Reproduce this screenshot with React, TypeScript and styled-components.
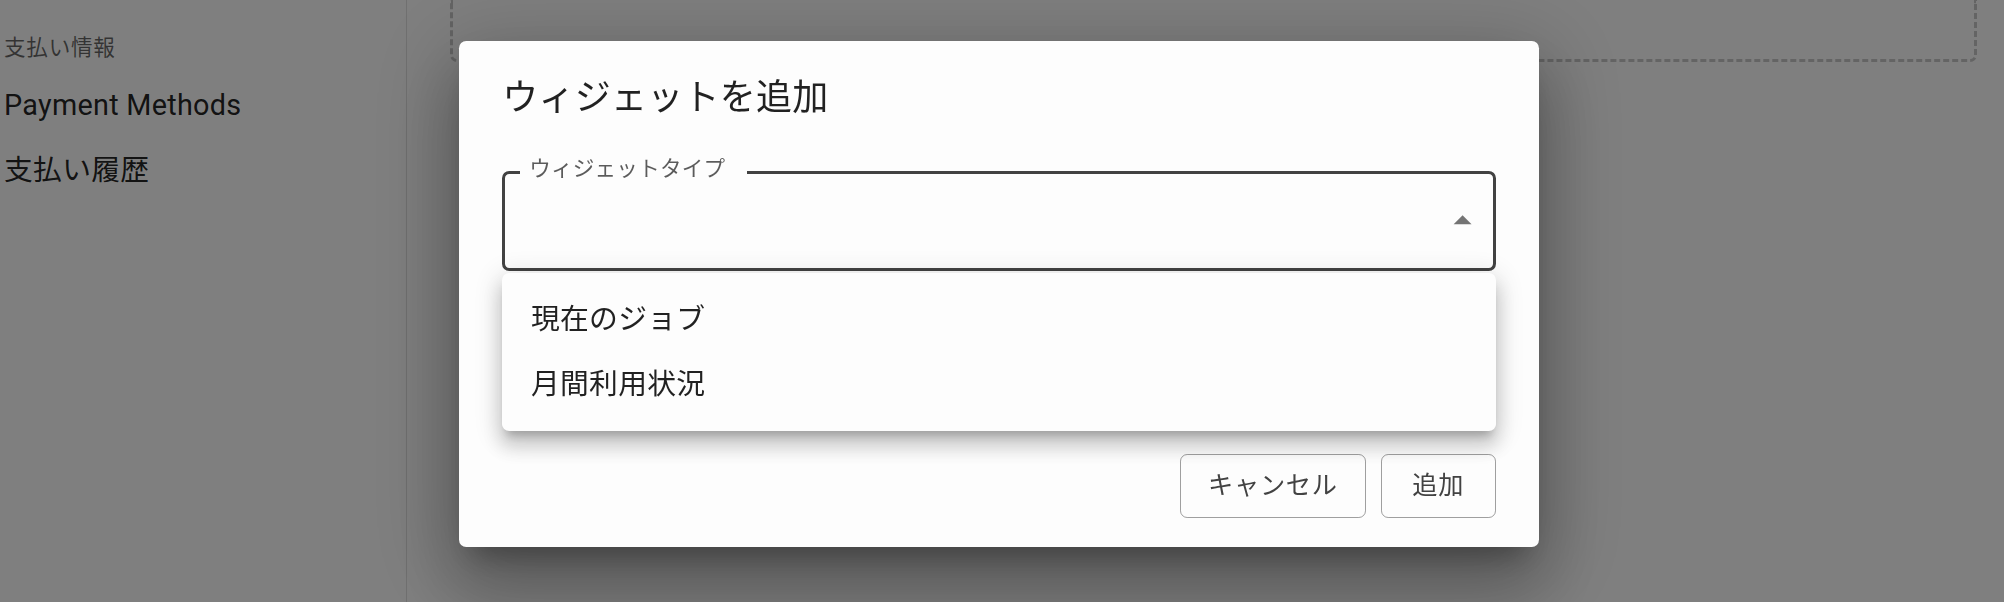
import React from 'react';
import styled, { createGlobalStyle } from 'styled-components';

const GlobalStyle = createGlobalStyle`
  html, body {
    margin: 0;
    padding: 0;
    height: 100%;
    overflow: hidden;
    background: #fff;
  }

  body {
    font-family: Roboto, 'Noto Sans CJK JP', sans-serif;
  }
`;

const Page = styled.div`
  display: flex;
  height: 100vh;
`;

const Sidebar = styled.nav`
  width: 407px;
  flex-shrink: 0;
  box-sizing: border-box;
  padding: 30px 0 0 4px;
  border-right: 1.8px solid rgba(0, 0, 0, 0.12);
`;

const SectionLabel = styled.div`
  font-size: 21.6px;
  line-height: 35.9px;
  letter-spacing: 0.03333em;
  color: rgba(0, 0, 0, 0.6);
  margin-bottom: 7px;
`;

const NavItem = styled.div`
  font-size: 28.8px;
  line-height: 43.2px;
  letter-spacing: 0.00938em;
  padding: 10.8px 0;
  color: rgba(0, 0, 0, 0.87);
`;

const Main = styled.main`
  flex: 1;
  padding: 0 27px 0 43px;
`;

const DropZone = styled.div`
  height: 61.6px;
  box-sizing: border-box;
  border: 3.6px dashed #c8c8c8;
  border-top: none;
  border-radius: 0 0 7px 7px;
`;

const Backdrop = styled.div`
  position: fixed;
  inset: 0;
  background: rgba(0, 0, 0, 0.5);
  display: flex;
  justify-content: center;
  align-items: flex-start;
  padding: 41px 6px 0 0;
  box-sizing: border-box;
  z-index: 10;
`;

const Dialog = styled.div`
  width: 1080px;
  display: flex;
  flex-direction: column;
  background: #fdfdfd;
  border-radius: 7.2px;
  box-shadow:
    0 19.8px 27px -12.6px rgba(0, 0, 0, 0.3),
    0 43.2px 68.4px 5.4px rgba(0, 0, 0, 0.2),
    0 16.2px 82.8px 14.4px rgba(0, 0, 0, 0.18);
`;

const DialogTitle = styled.h2`
  margin: 0;
  padding: 28.8px 43.2px;
  font-size: 36px;
  font-weight: 400;
  line-height: 57.6px;
  letter-spacing: 0.0075em;
  color: rgba(0, 0, 0, 0.87);
`;

const DialogContent = styled.div`
  padding: 0 43.2px 46px;
`;

const FieldWrap = styled.div`
  position: relative;
  margin: 14.4px 0 7.2px;
`;

const Field = styled.div<{ $focused?: boolean }>`
  height: 100.8px;
  box-sizing: border-box;
  display: flex;
  align-items: center;
  justify-content: flex-end;
  padding-right: ${({ $focused }) => ($focused ? '9px' : '10.8px')};
  border: ${({ $focused }) => ($focused ? '3.6px solid #424242' : '1.8px solid rgba(0, 0, 0, 0.23)')};
  border-radius: 7.2px;
`;

const FieldLabel = styled.span`
  position: absolute;
  top: -12.6px;
  left: 18px;
  padding: 0 22px 0 9px;
  background: #fdfdfd;
  font-size: 21.6px;
  line-height: 21.6px;
  letter-spacing: 0.00938em;
  color: rgba(0, 0, 0, 0.64);
`;

const ArrowIcon = styled.svg`
  width: 43.2px;
  height: 43.2px;
  fill: rgba(0, 0, 0, 0.54);
`;

const Menu = styled.ul`
  position: absolute;
  top: calc(100% + 1.6px);
  left: 0;
  right: 0;
  z-index: 2;
  margin: 0;
  padding: 14.4px 0;
  list-style: none;
  background: #fdfdfd;
  border-radius: 7.2px;
  box-shadow:
    0 9px 9px -5.4px rgba(0, 0, 0, 0.2),
    0 14.4px 18px 1.8px rgba(0, 0, 0, 0.14),
    0 5.4px 25.2px 3.6px rgba(0, 0, 0, 0.12);
`;

const MenuItem = styled.li`
  height: 64.8px;
  display: flex;
  align-items: center;
  padding: 0 28.8px;
  font-size: 28.8px;
  line-height: 1.5;
  letter-spacing: 0.00938em;
  color: rgba(0, 0, 0, 0.87);
`;

const Actions = styled.div`
  display: flex;
  justify-content: flex-end;
  gap: 15px;
  padding: 14.4px 43.2px 28.8px;
`;

const OutlinedButton = styled.button`
  min-width: 115.2px;
  padding: 9px 27px;
  font-family: inherit;
  font-size: 25.2px;
  font-weight: 400;
  line-height: 1.75;
  letter-spacing: 0.02857em;
  color: #424242;
  background: transparent;
  border: 1.8px solid rgba(66, 66, 66, 0.5);
  border-radius: 7.2px;
`;

const widgetTypes = ['現在のジョブ', '月間利用状況'];

const App = (): JSX.Element => (
  <>
    <GlobalStyle />
    <Page>
      <Sidebar>
        <SectionLabel>支払い情報</SectionLabel>
        <NavItem>Payment Methods</NavItem>
        <NavItem>支払い履歴</NavItem>
      </Sidebar>
      <Main>
        <DropZone />
      </Main>
    </Page>
    <Backdrop>
      <Dialog role="dialog">
        <DialogTitle>ウィジェットを追加</DialogTitle>
        <DialogContent>
          <FieldWrap>
            <Field $focused>
              <ArrowIcon viewBox="0 0 24 24">
                <path d="m7 14 5-5 5 5z" />
              </ArrowIcon>
            </Field>
            <FieldLabel>ウィジェットタイプ</FieldLabel>
            <Menu>
              {widgetTypes.map((t) => (
                <MenuItem key={t}>{t}</MenuItem>
              ))}
            </Menu>
          </FieldWrap>
          <FieldWrap>
            <Field />
          </FieldWrap>
        </DialogContent>
        <Actions>
          <OutlinedButton type="button">キャンセル</OutlinedButton>
          <OutlinedButton type="button">追加</OutlinedButton>
        </Actions>
      </Dialog>
    </Backdrop>
  </>
);

export default App;
